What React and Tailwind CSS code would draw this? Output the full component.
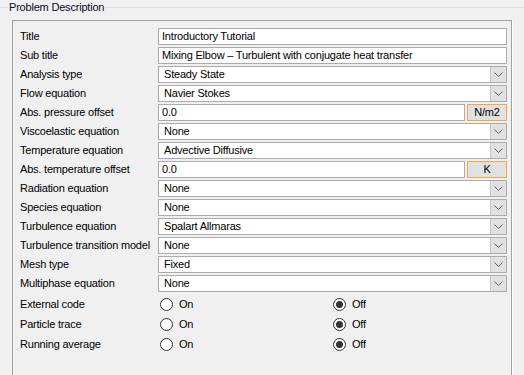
import React from "react";

const rows = [
    { label: "Title", type: "text", value: "Introductory Tutorial" },
    { label: "Sub title", type: "text", value: "Mixing Elbow – Turbulent with conjugate heat transfer" },
    { label: "Analysis type", type: "select", value: "Steady State" },
    { label: "Flow equation", type: "select", value: "Navier Stokes" },
    { label: "Abs. pressure offset", type: "unit", value: "0.0", unit: "N/m2" },
    { label: "Viscoelastic equation", type: "select", value: "None" },
    { label: "Temperature equation", type: "select", value: "Advective Diffusive" },
    { label: "Abs. temperature offset", type: "unit", value: "0.0", unit: "K" },
    { label: "Radiation equation", type: "select", value: "None" },
    { label: "Species equation", type: "select", value: "None" },
    { label: "Turbulence equation", type: "select", value: "Spalart Allmaras" },
    { label: "Turbulence transition model", type: "select", value: "None" },
    { label: "Mesh type", type: "select", value: "Fixed" },
    { label: "Multiphase equation", type: "select", value: "None" },
];

const radios = ["External code", "Particle trace", "Running average"];

const Chevron = () => (
    <svg width="9" height="5" viewBox="0 0 9 5">
        <path d="M0.5 0.5 L4.5 4.5 L8.5 0.5" fill="none" stroke="#606060" strokeWidth="1" />
    </svg>
);

const Radio = ({ checked, label }) => (
    <div className="flex items-center gap-[6px]">
        <div className="w-[13px] h-[13px] rounded-full border border-[#333] bg-white flex items-center justify-center">
            {checked && <div className="w-[7px] h-[7px] rounded-full bg-[#333]" />}
        </div>
        <span>{label}</span>
    </div>
);

const Field = ({ row }) => {
    if (row.type === "text") {
        return (
            <div className="h-[17px] border border-[#ababab] bg-white pl-[3px] flex items-center whitespace-nowrap">
                {row.value}
            </div>
        );
    }
    if (row.type === "select") {
        return (
            <div className="h-[17px] border border-[#ababab] bg-white flex items-center">
                <span className="flex-1 pl-[5px] whitespace-nowrap">{row.value}</span>
                <div className="w-[16px] h-[15px] bg-[#e1e1e1] border-l border-[#c8c8c8] flex items-center justify-center">
                    <Chevron />
                </div>
            </div>
        );
    }
    return (
        <div className="h-[17px] flex gap-[2px]">
            <div className="flex-1 border border-[#ababab] bg-white pl-[3px] flex items-center">{row.value}</div>
            <div className="w-[40px] border border-[#f5a742] bg-[#e1e1e1] flex items-center justify-center">{row.unit}</div>
        </div>
    );
};

export default function App() {
    return (
        <div className="w-[524px] h-[375px] bg-[#f0f0f0] overflow-hidden text-[11px] tracking-[-0.2px] text-black" style={{ fontFamily: '"Liberation Sans", Arial, sans-serif' }}>
            <div className="flex items-center h-[14px]">
                <div className="w-[8px] h-px bg-[#dcdcdc]" />
                <span className="px-px text-[#0a0a20]">Problem Description</span>
                <div className="flex-1 h-px bg-[#dcdcdc]" />
            </div>
            <div className="ml-[12px] mt-[6px] w-[500px] h-[360px] border-l border-t border-r border-[#a0a0a0] shadow-[1px_0_0_#ffffff] pt-[7px] pl-[7px] pr-[4px] flex flex-col">
                <div className="flex flex-col gap-[2px]">
                    {rows.map((row) => (
                        <div key={row.label} className="grid grid-cols-[138px_1fr] items-center">
                            <span className="whitespace-nowrap">{row.label}</span>
                            <Field row={row} />
                        </div>
                    ))}
                </div>
                <div className="flex flex-col mt-[2px]">
                    {radios.map((label) => (
                        <div key={label} className="grid grid-cols-[138px_1fr] items-center h-[20px]">
                            <span>{label}</span>
                            <div className="flex items-center ml-[2px]">
                                <div className="w-[173px]">
                                    <Radio checked={false} label="On" />
                                </div>
                                <Radio checked={true} label="Off" />
                            </div>
                        </div>
                    ))}
                </div>
            </div>
        </div>
    );
}
